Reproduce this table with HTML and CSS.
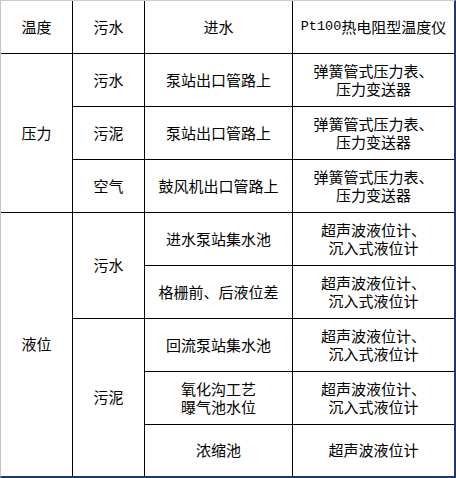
FILE: index.html
```html
<!DOCTYPE html>
<html lang="zh-CN">
<head>
<meta charset="utf-8">
<title>仪表选型表</title>
<link rel="stylesheet" href="styles.css">
</head>
<body>
<div class="frame">
  <div class="grid">
    <div class="cell">温度</div>
    <div class="cell">污水</div>
    <div class="cell">进水</div>
    <div class="cell lastcol"><span class="latin">Pt100</span>热电阻型温度仪</div>

    <div class="cell span3">压力</div>
    <div class="cell">污水</div>
    <div class="cell">泵站出口管路上</div>
    <div class="cell lastcol">弹簧管式压力表、<br>压力变送器</div>

    <div class="cell">污泥</div>
    <div class="cell">泵站出口管路上</div>
    <div class="cell lastcol">弹簧管式压力表、<br>压力变送器</div>

    <div class="cell">空气</div>
    <div class="cell">鼓风机出口管路上</div>
    <div class="cell lastcol">弹簧管式压力表、<br>压力变送器</div>

    <div class="cell span5 lastrow">液位</div>
    <div class="cell span2">污水</div>
    <div class="cell">进水泵站集水池</div>
    <div class="cell lastcol">超声波液位计、<br>沉入式液位计</div>

    <div class="cell">格栅前、后液位差</div>
    <div class="cell lastcol">超声波液位计、<br>沉入式液位计</div>

    <div class="cell span3 lastrow">污泥</div>
    <div class="cell">回流泵站集水池</div>
    <div class="cell lastcol">超声波液位计、<br>沉入式液位计</div>

    <div class="cell">氧化沟工艺<br>曝气池水位</div>
    <div class="cell lastcol">超声波液位计、<br>沉入式液位计</div>

    <div class="cell lastrow">浓缩池</div>
    <div class="cell lastcol lastrow">超声波液位计</div>
  </div>
</div>
</body>
</html>
```

FILE: styles.css
```css
* {
  box-sizing: border-box;
}

html, body {
  margin: 0;
  padding: 0;
  background: #ffffff;
}

body {
  font-family: "Noto Sans CJK SC", "Noto Sans", sans-serif;
  font-size: 15px;
  color: #000000;
}

.frame {
  width: 456px;
  height: 478px;
  border-left: 1px solid #c4c4c4;
  border-top: 1px solid #cccccc;
  border-right: 2px solid #1d3a6b;
  border-bottom: 2px solid #1d3a6b;
}

.grid {
  display: grid;
  grid-template-columns: 72px 72px 148px 161px;
  grid-template-rows: repeat(8, 53px) 51px;
}

.cell {
  display: flex;
  align-items: center;
  justify-content: center;
  text-align: center;
  line-height: 18.5px;
  border-right: 1px solid #000000;
  border-bottom: 1px solid #000000;
  white-space: nowrap;
}

.lastcol {
  border-right: none;
}

.lastrow {
  border-bottom: none;
}

.span2 {
  grid-row: span 2;
}

.span3 {
  grid-row: span 3;
}

.span5 {
  grid-row: span 5;
}

.latin {
  font-family: "Liberation Mono", "DejaVu Sans Mono", monospace;
  font-size: 13.5px;
}
```
